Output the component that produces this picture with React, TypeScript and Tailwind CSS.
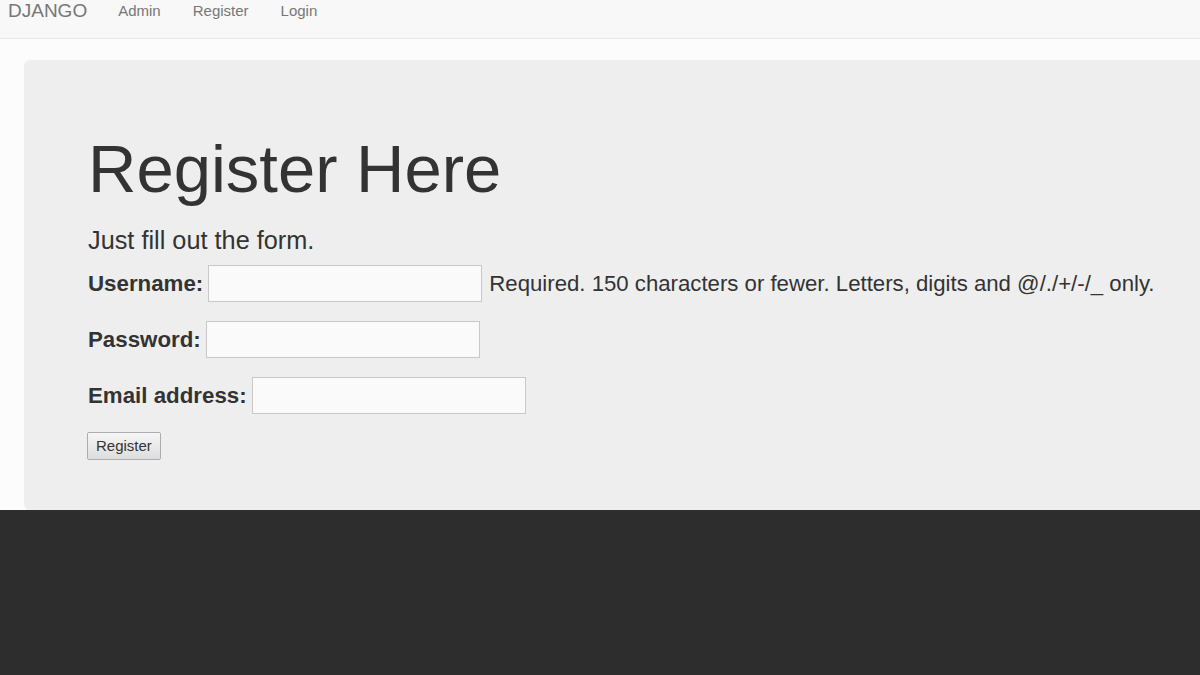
export default function App() {
  const rows = [
    { label: "Username:", help: "Required. 150 characters or fewer. Letters, digits and @/./+/-/_ only." },
    { label: "Password:", help: "" },
    { label: "Email address:", help: "" },
  ];

  return (
    <div className="w-[1200px] h-[675px] overflow-hidden flex flex-col bg-[#fcfcfc] text-[#333] font-['Liberation_Sans',Arial,sans-serif]">
      {/* Navbar */}
      <nav className="h-[39px] shrink-0 bg-[#f8f8f8] border-b border-[#e7e7e7] flex items-start">
        <a className="pl-[8px] text-[19px] leading-[22px] text-[#777]">DJANGO</a>
        <ul className="flex ml-[31px] gap-[32px] text-[15px] leading-[22px] text-[#777]">
          <li>Admin</li>
          <li>Register</li>
          <li>Login</li>
        </ul>
      </nav>

      {/* Jumbotron */}
      <div className="h-[471px] shrink-0 pt-[21px] pl-[24px]">
        <div className="h-[450px] bg-[#eeeeee] rounded-l-[6px] pl-[64px] pt-[72px]">
          <h1 className="text-[67px] leading-[74px]">Register Here</h1>
          <p className="mt-[18px] text-[25.3px] leading-[32px]">Just fill out the form.</p>
          <form className="mt-[9px]">
            {rows.map((r) => (
              <div key={r.label} className="flex items-center h-[37px] mb-[19px]">
                <label className="font-bold text-[22.3px]">{r.label}</label>
                <input
                  type={r.label === "Password:" ? "password" : "text"}
                  className="ml-[5px] w-[274px] h-[37px] bg-[#fafafa] border border-[#c8c8c8] outline-none"
                />
                {r.help && <span className="ml-[7px] text-[22.2px]">{r.help}</span>}
              </div>
            ))}
            <button
              type="button"
              className="-mt-[1px] -ml-[1px] h-[28px] px-[8px] text-[15px] text-[#333] border border-[#adadad] rounded-[2px] bg-gradient-to-b from-[#f6f6f6] to-[#dddddd]"
            >
              Register
            </button>
          </form>
        </div>
      </div>

      {/* Dark area */}
      <div className="flex-1 bg-[#2d2d2d]" />
    </div>
  );
}
